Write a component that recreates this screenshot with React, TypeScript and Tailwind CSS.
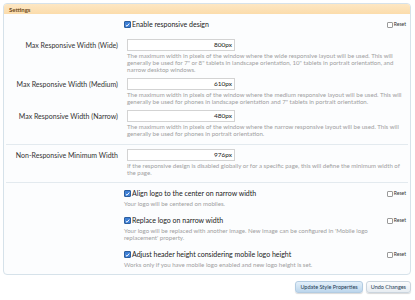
import React from 'react';

type Field = {
  label: string;
  value: string;
  lines: string[];
};

const widths: Field[] = [
  {
    label: 'Max Responsive Width (Wide)',
    value: '800px',
    lines: [
      'The maximum width in pixels of the window where the wide responsive layout will be used. This will',
      'generally be used for 7" or 8" tablets in landscape orientation, 10" tablets in portrait orientation, and',
      'narrow desktop windows.',
    ],
  },
  {
    label: 'Max Responsive Width (Medium)',
    value: '610px',
    lines: [
      'The maximum width in pixels of the window where the medium responsive layout will be used. This will',
      'generally be used for phones in landscape orientation and 7" tablets in portrait orientation.',
    ],
  },
  {
    label: 'Max Responsive Width (Narrow)',
    value: '480px',
    lines: [
      'The maximum width in pixels of the window where the narrow responsive layout will be used. This will',
      'generally be used for phones in portrait orientation.',
    ],
  },
];

const logoOptions = [
  {
    label: 'Align logo to the center on narrow width',
    lines: ['Your logo will be centered on mobiles.'],
  },
  {
    label: 'Replace logo on narrow width',
    lines: [
      "Your logo will be replaced with another image. New image can be configured in 'Mobile logo",
      "replacement' property.",
    ],
  },
  {
    label: 'Adjust header height considering mobile logo height',
    lines: ['Works only if you have mobile logo enabled and new logo height is set.'],
  },
];

const CheckedBox = () => (
  <span className="w-[7px] h-[7px] rounded-[1px] bg-[#3d7fd6] border border-[#2d5f9e] flex items-center justify-center shrink-0">
    <svg viewBox="0 0 8 8" className="w-[6px] h-[6px]">
      <path d="M1.3 4.2 L3.2 6 L6.8 1.6" stroke="white" strokeWidth="1.6" fill="none" />
    </svg>
  </span>
);

const Reset = () => (
  <label className="flex items-center gap-[1px] text-[5px] leading-[7px] text-[#333] shrink-0">
    <span className="w-[6px] h-[6px] border border-[#9a9a9a] rounded-[1px] bg-white" />
    Reset
  </label>
);

const Hint = ({ lines }: { lines: string[] }) => (
  <div className="text-[6.1px] leading-[7px] text-[#a0a0a0] whitespace-nowrap">
    {lines.map((l) => (
      <div key={l}>{l}</div>
    ))}
  </div>
);

const TextRow = ({ label, value, lines }: Field) => (
  <div className="flex">
    <div className="w-[114px] h-[12px] flex items-center justify-end text-[7px] text-[#333] whitespace-nowrap">
      {label}
    </div>
    <div className="ml-[9px] flex-1">
      <div className="w-[108px] h-[12px] border border-[#d3d3d3] bg-white text-right text-[6.5px] leading-[10px] text-[#222] pr-[2px]">
        {value}
      </div>
      <div className="mt-[1px]">
        <Hint lines={lines} />
      </div>
    </div>
  </div>
);

const App: React.FC = () => {
  return (
    <div className="w-[415px] h-[300px] bg-white font-['Lato',sans-serif] overflow-hidden">
      <div className="ml-[3px] mr-[4px] mt-[3px] rounded-[4px] border border-[#d6e2ea] bg-[#fcfdfe]">
        <div className="h-[10px] bg-gradient-to-b from-[#fde7c4] to-[#fbdcab] rounded-t-[3px] px-[5px] flex items-center text-[6px] font-bold text-[#6e4b1c]">
          Settings
        </div>

        <div className="flex items-center mt-[6px] h-[9px] pr-[4px]">
          <div className="w-[120px]" />
          <div className="flex-1 flex items-center gap-[1px] text-[7px] text-[#222]">
            <CheckedBox />
            Enable responsive design
          </div>
          <Reset />
        </div>

        <div className="mt-[10px] pb-[7px] flex flex-col gap-[5px]">
          {widths.map((w) => (
            <TextRow key={w.label} {...w} />
          ))}
        </div>

        <div className="border-t border-[#e3eaef] mx-[2px] pt-[4px] pb-[6px]">
          <div className="-mx-[2px]">
            <TextRow
              label="Non-Responsive Minimum Width"
              value="976px"
              lines={[
                'If the responsive design is disabled globally or for a specific page, this will define the minimum width of',
                'the page.',
              ]}
            />
          </div>
        </div>

        <div className="border-t border-[#e3eaef] mx-[2px] pt-[6px] pb-[6px] flex flex-col gap-[9px]">
          {logoOptions.map((o) => (
            <div key={o.label} className="flex pr-[2px]">
              <div className="w-[118px]" />
              <div className="flex-1">
                <div className="h-[9px] flex items-center gap-[1px] text-[7px] text-[#222]">
                  <CheckedBox />
                  {o.label}
                </div>
                <div className="mt-[2px]">
                  <Hint lines={o.lines} />
                </div>
              </div>
              <div className="pt-[1px]">
                <Reset />
              </div>
            </div>
          ))}
        </div>
      </div>

      <div className="flex justify-end gap-[3px] mr-[4px] mt-[6px] text-[5.5px]">
        <button className="h-[12px] px-[4px] rounded-[3px] bg-gradient-to-b from-[#e4f0fa] to-[#bcd6ec] border border-[#b3cce2] text-[#233b55] shadow-[0_1px_1px_rgba(0,0,0,0.15)]">
          Update Style Properties
        </button>
        <button className="h-[12px] px-[4px] rounded-[3px] bg-gradient-to-b from-[#fbfcfd] to-[#e7ecf1] border border-[#cbd5de] text-[#233b55] shadow-[0_1px_1px_rgba(0,0,0,0.15)]">
          Undo Changes
        </button>
      </div>
    </div>
  );
};

export default App;
